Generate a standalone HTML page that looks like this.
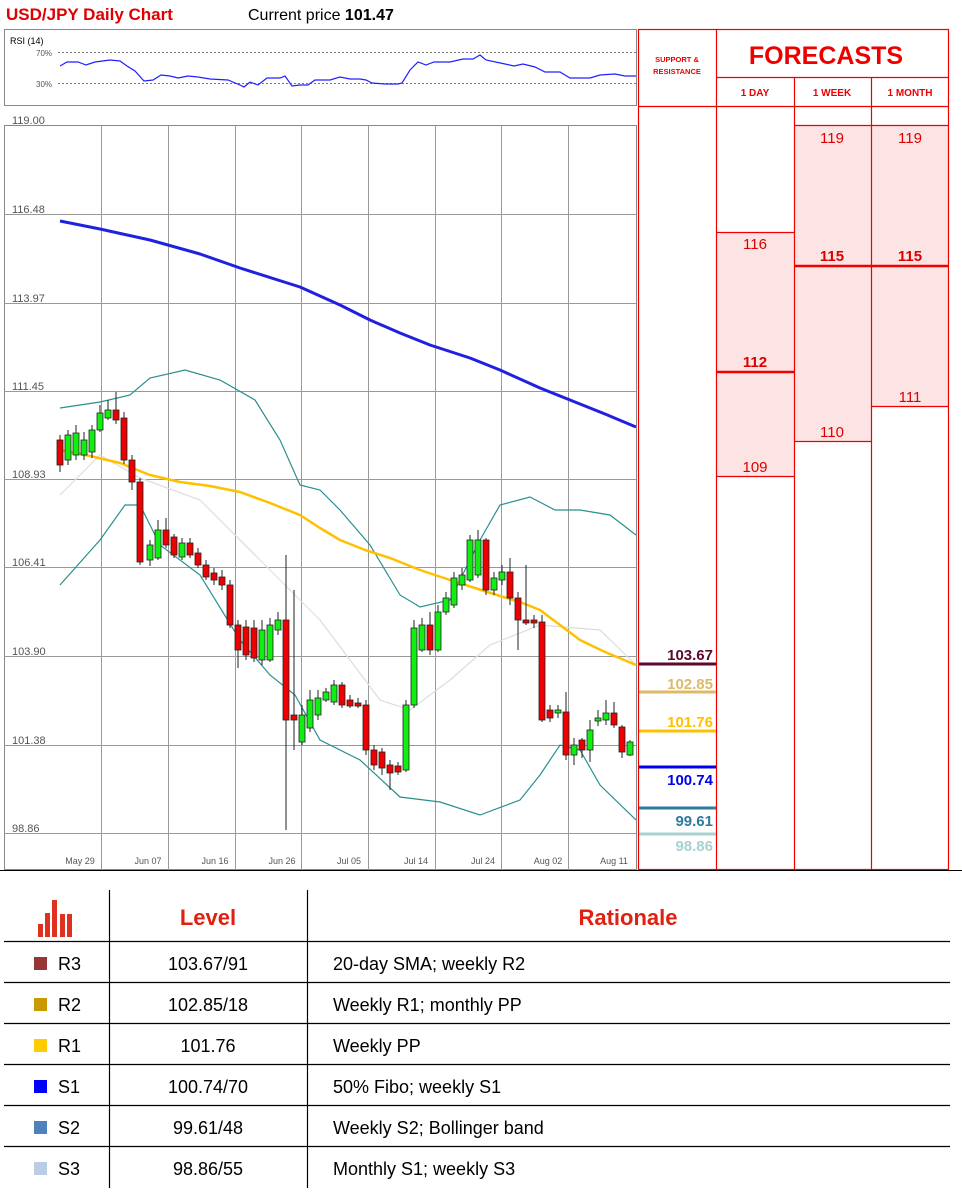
<!DOCTYPE html>
<html><head><meta charset="utf-8"><style>
body{margin:0;background:#fff;width:962px;height:1192px;overflow:hidden;font-family:"Liberation Sans",sans-serif}
svg{position:absolute;left:0;top:0}
</style></head><body>
<svg width="962" height="1192" viewBox="0 0 962 1192" font-family="Liberation Sans, sans-serif">
<text x="6" y="20" font-size="17" font-weight="bold" fill="#e00000">USD/JPY Daily Chart</text>
<text x="248" y="20" font-size="16" fill="#000">Current price <tspan font-weight="bold">101.47</tspan></text>
<rect x="4.5" y="29.5" width="632" height="76" fill="#fff" stroke="#888"/>
<text x="10" y="44" font-size="9" fill="#000">RSI (14)</text>
<text x="36" y="56" font-size="8" fill="#555">70%</text>
<text x="36" y="87" font-size="8" fill="#555">30%</text>
<line x1="58" y1="52.5" x2="636" y2="52.5" stroke="#777" stroke-dasharray="2,2"/>
<line x1="58" y1="83.5" x2="636" y2="83.5" stroke="#777" stroke-dasharray="2,2"/>
<polyline fill="none" stroke="#2020ff" stroke-width="1.2" points="60,66 67,62 78,62 86,65 95,62 110,60 120,61 127,66 135,71 144,81 153,80 161,75 170,76 178,78 188,76 198,77 210,79 228,80 240,85 244,87 250,82 258,85 267,78 280,78 285,76 292,86 300,85 308,85 315,80 330,80 340,77 350,79 360,79 366,80 372,83 385,84 398,84 402,83 410,70 418,62 426,65 434,62 450,62 463,59 473,59 480,55 486,60 505,64 514,66 523,64 535,67 545,72 560,72 570,78 590,78 600,75 615,74 625,76 636,76"/>
<rect x="4.5" y="125.5" width="632" height="744" fill="#fff" stroke="#888"/>
<g stroke="#999" stroke-width="1">
<line x1="4" y1="214.5" x2="636" y2="214.5"/><line x1="4" y1="303.5" x2="636" y2="303.5"/><line x1="4" y1="391.5" x2="636" y2="391.5"/><line x1="4" y1="479.5" x2="636" y2="479.5"/><line x1="4" y1="567.5" x2="636" y2="567.5"/><line x1="4" y1="656.5" x2="636" y2="656.5"/><line x1="4" y1="745.5" x2="636" y2="745.5"/><line x1="4" y1="833.5" x2="636" y2="833.5"/>
<line x1="101.5" y1="125" x2="101.5" y2="870"/><line x1="168.5" y1="125" x2="168.5" y2="870"/><line x1="235.5" y1="125" x2="235.5" y2="870"/><line x1="301.5" y1="125" x2="301.5" y2="870"/><line x1="368.5" y1="125" x2="368.5" y2="870"/><line x1="435.5" y1="125" x2="435.5" y2="870"/><line x1="501.5" y1="125" x2="501.5" y2="870"/><line x1="568.5" y1="125" x2="568.5" y2="870"/>
</g>
<g font-size="11" fill="#555">
<text x="12" y="124">119.00</text><text x="12" y="213">116.48</text><text x="12" y="302">113.97</text><text x="12" y="390">111.45</text><text x="12" y="478">108.93</text><text x="12" y="566">106.41</text><text x="12" y="655">103.90</text><text x="12" y="744">101.38</text><text x="12" y="832">98.86</text>
</g>
<g font-size="9" fill="#555" text-anchor="middle">
<text x="80" y="864">May 29</text><text x="148" y="864">Jun 07</text><text x="215" y="864">Jun 16</text><text x="282" y="864">Jun 26</text><text x="349" y="864">Jul 05</text><text x="416" y="864">Jul 14</text><text x="483" y="864">Jul 24</text><text x="548" y="864">Aug 02</text><text x="614" y="864">Aug 11</text>
</g>
<polyline fill="none" stroke="#ddd" stroke-width="1.2" points="60,495 100,455 140,478 200,500 260,560 320,620 380,700 410,710 450,680 490,645 540,625 600,630 636,665"/>
<polyline fill="none" stroke="#2a8f8f" stroke-width="1.2" points="60,408 100,402 130,395 150,378 185,370 220,380 255,400 280,440 300,485 320,490 340,510 370,545 400,595 420,607 450,600 480,540 500,505 530,497 555,510 580,510 610,515 636,535"/>
<polyline fill="none" stroke="#2a8f8f" stroke-width="1.2" points="60,585 100,540 125,505 140,505 160,545 200,575 240,640 270,675 295,695 320,740 360,760 400,797 440,802 480,815 520,800 540,775 560,745 580,750 600,785 636,820"/>
<polyline fill="none" stroke="#2020e0" stroke-width="3" stroke-linejoin="round" points="60,221 100,229 150,240 200,254 240,268 300,287 340,305 370,320 400,333 430,345 470,358 500,370 540,388 570,400 605,414 636,427"/>
<polyline fill="none" stroke="#ffc000" stroke-width="2.5" stroke-linejoin="round" points="60,450 90,456 120,463 150,475 180,482 210,486 240,492 270,503 300,515 320,528 340,540 365,550 390,558 420,570 450,580 475,588 500,596 520,602 540,610 560,625 580,640 605,652 636,665"/>
<g stroke="#222" stroke-width="1">
<line x1="60" y1="435" x2="60" y2="472"/><line x1="68" y1="430" x2="68" y2="465"/><line x1="76" y1="425" x2="76" y2="460"/><line x1="84" y1="432" x2="84" y2="460"/><line x1="92" y1="425" x2="92" y2="458"/><line x1="100" y1="405" x2="100" y2="432"/><line x1="108" y1="400" x2="108" y2="420"/><line x1="116" y1="392" x2="116" y2="424"/><line x1="124" y1="412" x2="124" y2="464"/><line x1="132" y1="455" x2="132" y2="490"/><line x1="140" y1="478" x2="140" y2="565"/><line x1="150" y1="540" x2="150" y2="566"/><line x1="158" y1="520" x2="158" y2="560"/><line x1="166" y1="518" x2="166" y2="548"/><line x1="174" y1="534" x2="174" y2="558"/><line x1="182" y1="538" x2="182" y2="560"/><line x1="190" y1="538" x2="190" y2="558"/><line x1="198" y1="548" x2="198" y2="568"/><line x1="206" y1="560" x2="206" y2="580"/><line x1="214" y1="568" x2="214" y2="585"/><line x1="222" y1="570" x2="222" y2="590"/><line x1="230" y1="580" x2="230" y2="628"/><line x1="238" y1="620" x2="238" y2="668"/><line x1="246" y1="620" x2="246" y2="660"/><line x1="254" y1="620" x2="254" y2="662"/><line x1="262" y1="620" x2="262" y2="665"/><line x1="270" y1="618" x2="270" y2="662"/><line x1="278" y1="612" x2="278" y2="635"/><line x1="286" y1="555" x2="286" y2="830"/><line x1="294" y1="590" x2="294" y2="750"/><line x1="302" y1="705" x2="302" y2="745"/><line x1="310" y1="690" x2="310" y2="732"/><line x1="318" y1="690" x2="318" y2="720"/><line x1="326" y1="688" x2="326" y2="702"/><line x1="334" y1="680" x2="334" y2="705"/><line x1="342" y1="682" x2="342" y2="708"/><line x1="350" y1="695" x2="350" y2="708"/><line x1="358" y1="698" x2="358" y2="708"/><line x1="366" y1="700" x2="366" y2="755"/><line x1="374" y1="745" x2="374" y2="770"/><line x1="382" y1="748" x2="382" y2="775"/><line x1="390" y1="760" x2="390" y2="790"/><line x1="398" y1="762" x2="398" y2="775"/><line x1="406" y1="700" x2="406" y2="772"/><line x1="414" y1="620" x2="414" y2="708"/><line x1="422" y1="618" x2="422" y2="652"/><line x1="430" y1="612" x2="430" y2="655"/><line x1="438" y1="605" x2="438" y2="652"/><line x1="446" y1="592" x2="446" y2="615"/><line x1="454" y1="572" x2="454" y2="608"/><line x1="462" y1="568" x2="462" y2="590"/><line x1="470" y1="535" x2="470" y2="582"/><line x1="478" y1="530" x2="478" y2="578"/><line x1="486" y1="538" x2="486" y2="595"/><line x1="494" y1="572" x2="494" y2="595"/><line x1="502" y1="565" x2="502" y2="585"/><line x1="510" y1="558" x2="510" y2="605"/><line x1="518" y1="592" x2="518" y2="650"/><line x1="526" y1="565" x2="526" y2="625"/><line x1="534" y1="615" x2="534" y2="628"/><line x1="542" y1="615" x2="542" y2="722"/><line x1="550" y1="705" x2="550" y2="722"/><line x1="558" y1="705" x2="558" y2="718"/><line x1="566" y1="692" x2="566" y2="760"/><line x1="574" y1="738" x2="574" y2="765"/><line x1="582" y1="738" x2="582" y2="758"/><line x1="590" y1="720" x2="590" y2="762"/><line x1="598" y1="710" x2="598" y2="726"/><line x1="606" y1="700" x2="606" y2="725"/><line x1="614" y1="702" x2="614" y2="728"/><line x1="622" y1="725" x2="622" y2="758"/><line x1="630" y1="740" x2="630" y2="756"/>
</g>
<g stroke="#222" stroke-width="0.8">
<rect x="57" y="440" width="6" height="25" fill="#e00"/><rect x="65" y="435" width="6" height="25" fill="#1e1"/><rect x="73" y="433" width="6" height="22" fill="#1e1"/><rect x="81" y="440" width="6" height="15" fill="#1e1"/><rect x="89" y="430" width="6" height="22" fill="#1e1"/><rect x="97" y="413" width="6" height="17" fill="#1e1"/><rect x="105" y="410" width="6" height="8" fill="#1e1"/><rect x="113" y="410" width="6" height="10" fill="#e00"/><rect x="121" y="418" width="6" height="42" fill="#e00"/><rect x="129" y="460" width="6" height="22" fill="#e00"/><rect x="137" y="482" width="6" height="80" fill="#e00"/><rect x="147" y="545" width="6" height="15" fill="#1e1"/><rect x="155" y="530" width="6" height="28" fill="#1e1"/><rect x="163" y="530" width="6" height="15" fill="#e00"/><rect x="171" y="537" width="6" height="18" fill="#e00"/><rect x="179" y="543" width="6" height="14" fill="#1e1"/><rect x="187" y="543" width="6" height="12" fill="#e00"/><rect x="195" y="553" width="6" height="12" fill="#e00"/><rect x="203" y="565" width="6" height="12" fill="#e00"/><rect x="211" y="573" width="6" height="7" fill="#e00"/><rect x="219" y="577" width="6" height="8" fill="#e00"/><rect x="227" y="585" width="6" height="40" fill="#e00"/><rect x="235" y="625" width="6" height="25" fill="#e00"/><rect x="243" y="627" width="6" height="28" fill="#e00"/><rect x="251" y="628" width="6" height="30" fill="#e00"/><rect x="259" y="630" width="6" height="30" fill="#1e1"/><rect x="267" y="625" width="6" height="35" fill="#1e1"/><rect x="275" y="620" width="6" height="10" fill="#1e1"/><rect x="283" y="620" width="6" height="100" fill="#e00"/><rect x="291" y="715" width="6" height="5" fill="#e00"/><rect x="299" y="715" width="6" height="27" fill="#1e1"/><rect x="307" y="700" width="6" height="28" fill="#1e1"/><rect x="315" y="698" width="6" height="17" fill="#1e1"/><rect x="323" y="692" width="6" height="8" fill="#1e1"/><rect x="331" y="685" width="6" height="17" fill="#1e1"/><rect x="339" y="685" width="6" height="20" fill="#e00"/><rect x="347" y="700" width="6" height="6" fill="#e00"/><rect x="355" y="703" width="6" height="3" fill="#e00"/><rect x="363" y="705" width="6" height="45" fill="#e00"/><rect x="371" y="750" width="6" height="15" fill="#e00"/><rect x="379" y="752" width="6" height="16" fill="#e00"/><rect x="387" y="765" width="6" height="8" fill="#e00"/><rect x="395" y="766" width="6" height="6" fill="#e00"/><rect x="403" y="705" width="6" height="65" fill="#1e1"/><rect x="411" y="628" width="6" height="77" fill="#1e1"/><rect x="419" y="625" width="6" height="25" fill="#1e1"/><rect x="427" y="625" width="6" height="25" fill="#e00"/><rect x="435" y="612" width="6" height="38" fill="#1e1"/><rect x="443" y="598" width="6" height="14" fill="#1e1"/><rect x="451" y="578" width="6" height="27" fill="#1e1"/><rect x="459" y="575" width="6" height="10" fill="#1e1"/><rect x="467" y="540" width="6" height="40" fill="#1e1"/><rect x="475" y="540" width="6" height="35" fill="#1e1"/><rect x="483" y="540" width="6" height="50" fill="#e00"/><rect x="491" y="578" width="6" height="12" fill="#1e1"/><rect x="499" y="572" width="6" height="8" fill="#1e1"/><rect x="507" y="572" width="6" height="26" fill="#e00"/><rect x="515" y="598" width="6" height="22" fill="#e00"/><rect x="523" y="620" width="6" height="3" fill="#e00"/><rect x="531" y="620" width="6" height="3" fill="#e00"/><rect x="539" y="622" width="6" height="98" fill="#e00"/><rect x="547" y="710" width="6" height="8" fill="#e00"/><rect x="555" y="710" width="6" height="3" fill="#1e1"/><rect x="563" y="712" width="6" height="43" fill="#e00"/><rect x="571" y="745" width="6" height="10" fill="#1e1"/><rect x="579" y="740" width="6" height="10" fill="#e00"/><rect x="587" y="730" width="6" height="20" fill="#1e1"/><rect x="595" y="718" width="6" height="3" fill="#1e1"/><rect x="603" y="713" width="6" height="7" fill="#1e1"/><rect x="611" y="713" width="6" height="12" fill="#e00"/><rect x="619" y="727" width="6" height="25" fill="#e00"/><rect x="627" y="742" width="6" height="13" fill="#1e1"/>
</g>
<rect x="717" y="232" width="77" height="244" fill="#fde4e4"/>
<rect x="795" y="125" width="76" height="316" fill="#fde4e4"/>
<rect x="872" y="125" width="76" height="281" fill="#fde4e4"/>
<g stroke="#e00" stroke-width="1.2" fill="none">
<rect x="638.5" y="29.5" width="310" height="840"/>
<line x1="716.5" y1="29" x2="716.5" y2="870"/><line x1="794.5" y1="77" x2="794.5" y2="870"/><line x1="871.5" y1="77" x2="871.5" y2="870"/>
<line x1="716" y1="77.5" x2="949" y2="77.5"/><line x1="638" y1="106.5" x2="949" y2="106.5"/><line x1="794" y1="125.5" x2="949" y2="125.5"/>
<line x1="716" y1="232.5" x2="794" y2="232.5"/><line x1="716" y1="476.5" x2="794" y2="476.5"/><line x1="794" y1="441.5" x2="871" y2="441.5"/><line x1="871" y1="406.5" x2="949" y2="406.5"/>
</g>
<g stroke="#e00" stroke-width="2.5"><line x1="716" y1="372" x2="794" y2="372"/><line x1="794" y1="266" x2="949" y2="266"/></g>
<text x="826" y="64" font-size="25" font-weight="bold" fill="#e00" text-anchor="middle">FORECASTS</text>
<g font-size="7.5" fill="#e00" text-anchor="middle" font-weight="bold"><text x="677" y="62">SUPPORT &amp;</text><text x="677" y="74">RESISTANCE</text></g>
<g font-size="10" fill="#e00" text-anchor="middle" font-weight="bold"><text x="755" y="96">1 DAY</text><text x="832" y="96">1 WEEK</text><text x="910" y="96">1 MONTH</text></g>
<g font-size="15" fill="#d00" text-anchor="middle">
<text x="755" y="249">116</text><text x="755" y="367" font-weight="bold">112</text><text x="755" y="472">109</text>
<text x="832" y="143">119</text><text x="832" y="261" font-weight="bold">115</text><text x="832" y="437">110</text>
<text x="910" y="143">119</text><text x="910" y="261" font-weight="bold">115</text><text x="910" y="402">111</text>
</g>
<g stroke-width="3"><line x1="639" y1="664" x2="716" y2="664" stroke="#5a0a2e"/><line x1="639" y1="692" x2="716" y2="692" stroke="#dcb96b"/><line x1="639" y1="731" x2="716" y2="731" stroke="#ffc000"/><line x1="639" y1="767" x2="716" y2="767" stroke="#0000ee"/><line x1="639" y1="808" x2="716" y2="808" stroke="#2e7aa0"/><line x1="639" y1="834" x2="716" y2="834" stroke="#a8d2d2"/></g>
<g font-size="15" font-weight="bold" text-anchor="end">
<text x="713" y="660" fill="#5a0a2e">103.67</text><text x="713" y="689" fill="#dcb96b">102.85</text><text x="713" y="727" fill="#ffc000">101.76</text><text x="713" y="785" fill="#0000ee">100.74</text><text x="713" y="826" fill="#2e7aa0">99.61</text><text x="713" y="851" fill="#a8d2d2">98.86</text>
</g>
<line x1="0" y1="870.5" x2="962" y2="870.5" stroke="#000"/>
<g fill="#e03020"><rect x="38" y="924" width="5" height="13"/><rect x="45" y="913" width="5" height="24"/><rect x="52" y="900" width="5" height="37"/><rect x="60" y="914" width="5" height="23"/><rect x="67" y="914" width="5" height="23"/></g>
<g stroke="#000" stroke-width="1.2">
<line x1="109.5" y1="890" x2="109.5" y2="1188"/><line x1="307.5" y1="890" x2="307.5" y2="1188"/>
<line x1="4" y1="941.5" x2="950" y2="941.5"/><line x1="4" y1="982.5" x2="950" y2="982.5"/><line x1="4" y1="1023.5" x2="950" y2="1023.5"/><line x1="4" y1="1064.5" x2="950" y2="1064.5"/><line x1="4" y1="1105.5" x2="950" y2="1105.5"/><line x1="4" y1="1146.5" x2="950" y2="1146.5"/>
</g>
<g font-size="22" font-weight="bold" fill="#e02010" text-anchor="middle"><text x="208" y="925">Level</text><text x="628" y="925">Rationale</text></g>
<rect x="34" y="957" width="13" height="13" fill="#953735"/><rect x="34" y="998" width="13" height="13" fill="#c89a00"/><rect x="34" y="1039" width="13" height="13" fill="#ffcc00"/><rect x="34" y="1080" width="13" height="13" fill="#0000ff"/><rect x="34" y="1121" width="13" height="13" fill="#4f81bd"/><rect x="34" y="1162" width="13" height="13" fill="#b9cde5"/>
<g font-size="18" fill="#000">
<text x="58" y="970">R3</text><text x="58" y="1011">R2</text><text x="58" y="1052">R1</text><text x="58" y="1093">S1</text><text x="58" y="1134">S2</text><text x="58" y="1175">S3</text>
<g text-anchor="middle"><text x="208" y="970">103.67/91</text><text x="208" y="1011">102.85/18</text><text x="208" y="1052">101.76</text><text x="208" y="1093">100.74/70</text><text x="208" y="1134">99.61/48</text><text x="208" y="1175">98.86/55</text></g>
<text x="333" y="970">20-day SMA; weekly R2</text><text x="333" y="1011">Weekly R1; monthly PP</text><text x="333" y="1052">Weekly PP</text><text x="333" y="1093">50% Fibo; weekly S1</text><text x="333" y="1134">Weekly S2; Bollinger band</text><text x="333" y="1175">Monthly S1; weekly S3</text>
</g>
</svg>
</body></html>
